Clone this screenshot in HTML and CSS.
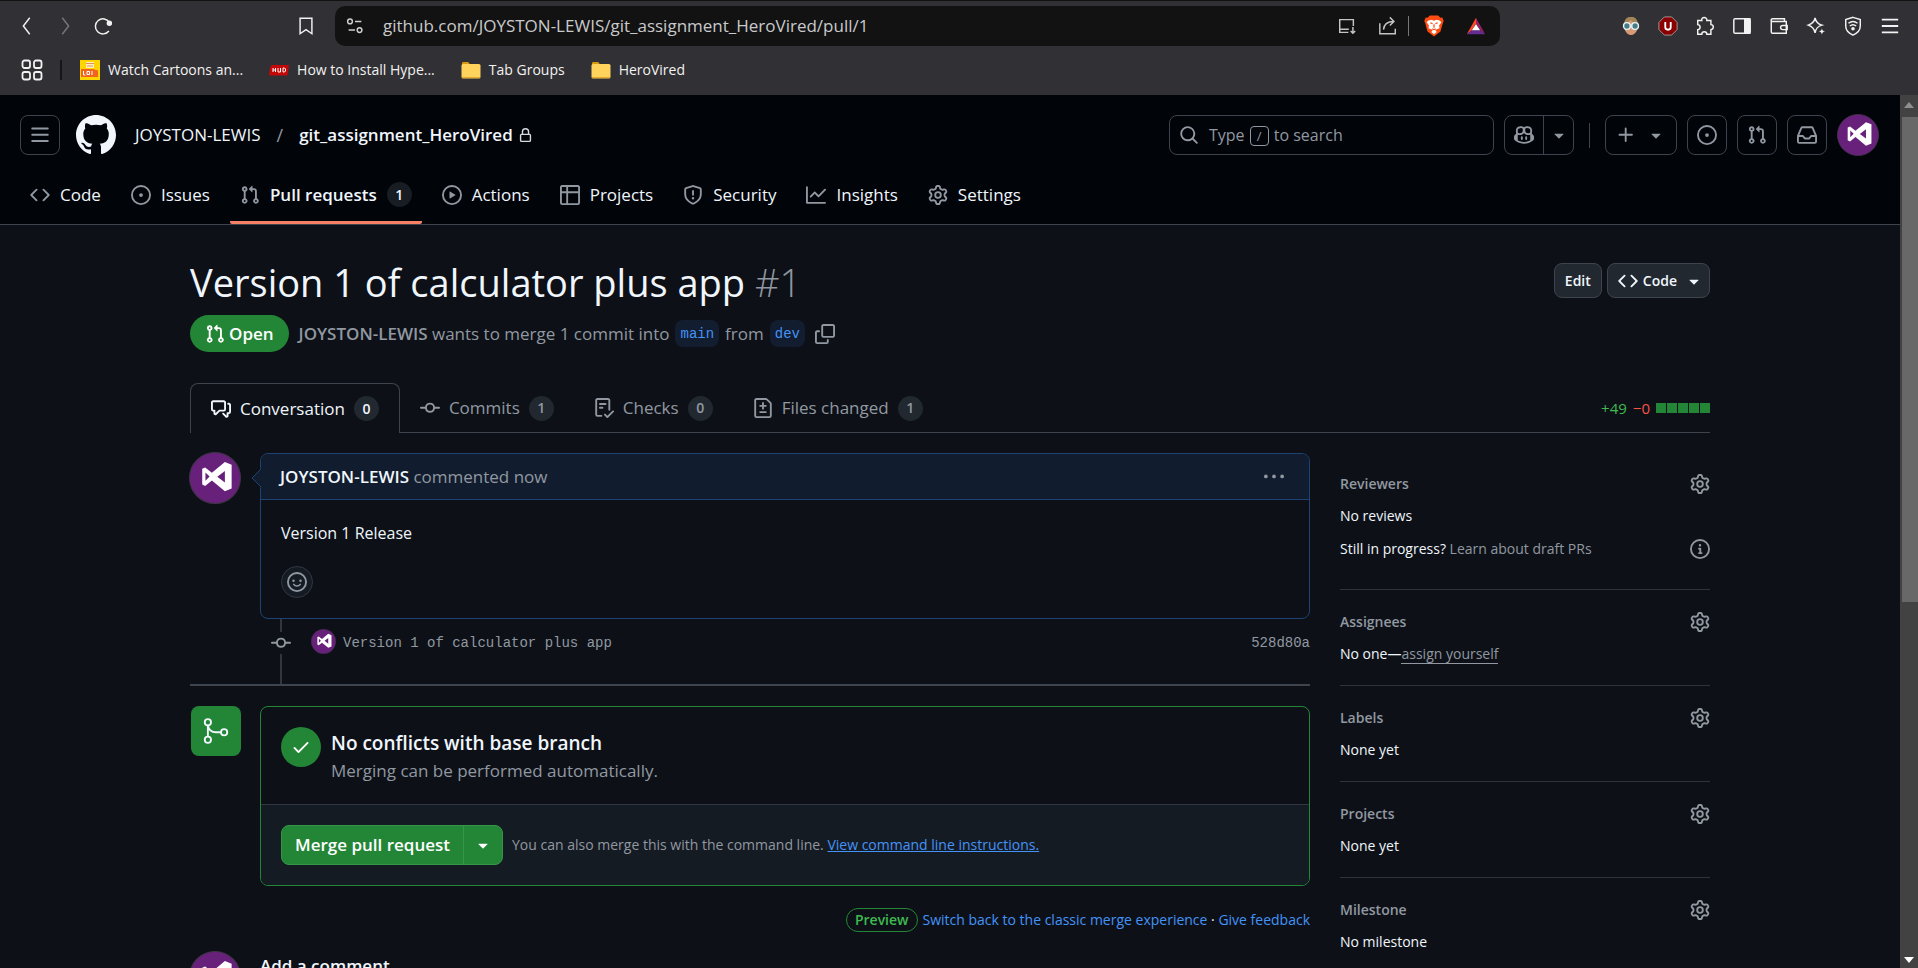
FILE: index.html
```html
<!DOCTYPE html>
<html lang="en">
<head>
<meta charset="utf-8">
<title>Version 1 of calculator plus app by JOYSTON-LEWIS · Pull Request #1</title>
<link rel="stylesheet" href="styles.css">
</head>
<body>
<svg class="sprite" aria-hidden="true">
  <symbol id="i-code" viewBox="0 0 16 16"><path d="m11.28 3.22 4.25 4.25a.75.75 0 0 1 0 1.06l-4.25 4.25a.749.749 0 0 1-1.275-.326.749.749 0 0 1 .215-.734L13.94 8l-3.72-3.72a.749.749 0 0 1 .326-1.275.749.749 0 0 1 .734.215Zm-6.56 0a.751.751 0 0 1 1.042.018.751.751 0 0 1 .018 1.042L2.06 8l3.72 3.72a.749.749 0 0 1-.326 1.275.749.749 0 0 1-.734-.215L.47 8.53a.75.75 0 0 1 0-1.06Z"/></symbol>
  <symbol id="i-issue" viewBox="0 0 16 16"><path d="M8 9.5a1.5 1.5 0 1 0 0-3 1.5 1.5 0 0 0 0 3Z"/><path d="M8 0a8 8 0 1 1 0 16A8 8 0 0 1 8 0ZM1.5 8a6.5 6.5 0 1 0 13 0 6.5 6.5 0 0 0-13 0Z"/></symbol>
  <symbol id="i-pr" viewBox="0 0 16 16"><path d="M1.5 3.25a2.25 2.25 0 1 1 3 2.122v5.256a2.251 2.251 0 1 1-1.5 0V5.372A2.25 2.25 0 0 1 1.5 3.25Zm5.677-.177L9.573.677A.25.25 0 0 1 10 .854V2.5h1A2.5 2.5 0 0 1 13.5 5v5.628a2.251 2.251 0 1 1-1.5 0V5a1 1 0 0 0-1-1h-1v1.646a.25.25 0 0 1-.427.177L7.177 3.427a.25.25 0 0 1 0-.354ZM3.75 2.5a.75.75 0 1 0 0 1.5.75.75 0 0 0 0-1.5Zm0 9.5a.75.75 0 1 0 0 1.5.75.75 0 0 0 0-1.5Zm8.25.75a.75.75 0 1 0 1.5 0 .75.75 0 0 0-1.5 0Z"/></symbol>
  <symbol id="i-play" viewBox="0 0 16 16"><path d="M8 0a8 8 0 1 1 0 16A8 8 0 0 1 8 0ZM1.5 8a6.5 6.5 0 1 0 13 0 6.5 6.5 0 0 0-13 0Zm4.879-2.773 4.264 2.559a.25.25 0 0 1 0 .428l-4.264 2.559A.25.25 0 0 1 6 10.559V5.442a.25.25 0 0 1 .379-.215Z"/></symbol>
  <symbol id="i-table" viewBox="0 0 16 16"><path d="M0 1.75C0 .784.784 0 1.75 0h12.5C15.216 0 16 .784 16 1.75v12.5A1.75 1.75 0 0 1 14.25 16H1.75A1.75 1.75 0 0 1 0 14.25ZM6.5 6.5v8h7.75a.25.25 0 0 0 .25-.25V6.5Zm8-1.5V1.75a.25.25 0 0 0-.25-.25H6.5V5Zm-13 1.5v7.75c0 .138.112.25.25.25H5v-8ZM5 5V1.5H1.75a.25.25 0 0 0-.25.25V5Z"/></symbol>
  <symbol id="i-shield" viewBox="0 0 16 16"><path d="M7.467.133a1.748 1.748 0 0 1 1.066 0l5.25 1.68A1.75 1.75 0 0 1 15 3.48V7c0 1.566-.32 3.182-1.303 4.682-.983 1.498-2.585 2.813-5.032 3.855a1.697 1.697 0 0 1-1.33 0c-2.447-1.042-4.049-2.357-5.032-3.855C1.32 10.182 1 8.566 1 7V3.48a1.75 1.75 0 0 1 1.217-1.667Zm.61 1.429a.25.25 0 0 0-.153 0l-5.25 1.68a.25.25 0 0 0-.174.238V7c0 1.358.275 2.666 1.057 3.86.784 1.194 2.121 2.34 4.366 3.297a.196.196 0 0 0 .154 0c2.245-.956 3.582-2.104 4.366-3.298C13.225 9.666 13.5 8.36 13.5 7V3.48a.251.251 0 0 0-.174-.237l-5.25-1.68ZM8.75 4.75v3a.75.75 0 0 1-1.5 0v-3a.75.75 0 0 1 1.5 0ZM9 10.5a1 1 0 1 1-2 0 1 1 0 0 1 2 0Z"/></symbol>
  <symbol id="i-graph" viewBox="0 0 16 16"><path d="M1.5 1.75V13.5h13.75a.75.75 0 0 1 0 1.5H.75a.75.75 0 0 1-.75-.75V1.75a.75.75 0 0 1 1.5 0Zm14.28 2.53-5.25 5.25a.75.75 0 0 1-1.06 0L7 7.06 4.28 9.78a.751.751 0 0 1-1.042-.018.751.751 0 0 1-.018-1.042l3.25-3.25a.75.75 0 0 1 1.06 0L10 7.94l4.72-4.72a.751.751 0 0 1 1.042.018.751.751 0 0 1 .018 1.042Z"/></symbol>
  <symbol id="i-gear" viewBox="0 0 16 16"><path d="M8 0a8.2 8.2 0 0 1 .701.031C9.444.095 9.99.645 10.16 1.29l.288 1.107c.018.066.079.158.212.224.231.114.454.243.668.386.123.082.233.09.299.071l1.103-.303c.644-.176 1.392.021 1.82.63.27.385.506.792.704 1.218.315.675.111 1.422-.364 1.891l-.814.806c-.049.048-.098.147-.088.294.016.257.016.515 0 .772-.01.147.038.246.088.294l.814.806c.475.469.679 1.216.364 1.891a7.977 7.977 0 0 1-.704 1.217c-.428.61-1.176.807-1.82.63l-1.102-.302c-.067-.019-.177-.011-.3.071a5.909 5.909 0 0 1-.668.386c-.133.066-.194.158-.211.224l-.29 1.106c-.168.646-.715 1.196-1.458 1.26a8.006 8.006 0 0 1-1.402 0c-.743-.064-1.289-.614-1.458-1.26l-.289-1.106c-.018-.066-.079-.158-.212-.224a5.738 5.738 0 0 1-.668-.386c-.123-.082-.233-.09-.299-.071l-1.103.303c-.644.176-1.392-.021-1.82-.63a8.12 8.12 0 0 1-.704-1.218c-.315-.675-.111-1.422.363-1.891l.815-.806c.05-.048.098-.147.088-.294a6.214 6.214 0 0 1 0-.772c.01-.147-.038-.246-.088-.294l-.815-.806C.635 6.045.431 5.298.746 4.623a7.92 7.92 0 0 1 .704-1.217c.428-.61 1.176-.807 1.82-.63l1.102.302c.067.019.177.011.3-.071.214-.143.437-.272.668-.386.133-.066.194-.158.211-.224l.29-1.106C6.009.645 6.556.095 7.299.03 7.53.01 7.764 0 8 0Zm-.571 1.525c-.036.003-.108.036-.137.146l-.289 1.105c-.147.561-.549.967-.998 1.189-.173.086-.34.183-.5.29-.417.278-.97.423-1.529.27l-1.103-.303c-.109-.03-.175.016-.195.045-.22.312-.412.644-.573.99-.014.031-.021.11.059.19l.815.806c.411.406.562.957.53 1.456a4.709 4.709 0 0 0 0 .582c.032.499-.119 1.05-.53 1.456l-.815.806c-.081.08-.073.159-.059.19.162.346.353.677.573.989.02.03.085.076.195.046l1.102-.303c.56-.153 1.113-.008 1.53.27.161.107.328.204.501.29.447.222.85.629.997 1.189l.289 1.105c.029.109.101.143.137.146a6.6 6.6 0 0 0 1.142 0c.036-.003.108-.036.137-.146l.289-1.105c.147-.561.549-.967.998-1.189.173-.086.34-.183.5-.29.417-.278.97-.423 1.529-.27l1.103.303c.109.029.175-.016.195-.045.22-.313.411-.644.573-.99.014-.031.021-.11-.059-.19l-.815-.806c-.411-.406-.562-.957-.53-1.456a4.709 4.709 0 0 0 0-.582c-.032-.499.119-1.05.53-1.456l.815-.806c.081-.08.073-.159.059-.19a6.464 6.464 0 0 0-.573-.989c-.02-.03-.085-.076-.195-.046l-1.102.303c-.56.153-1.113.008-1.53-.27a4.44 4.44 0 0 0-.501-.29c-.447-.222-.85-.629-.997-1.189l-.289-1.105c-.029-.11-.101-.143-.137-.146a6.6 6.6 0 0 0-1.142 0ZM11 8a3 3 0 1 1-6 0 3 3 0 0 1 6 0ZM9.5 8a1.5 1.5 0 1 0-3.001.001A1.5 1.5 0 0 0 9.5 8Z"/></symbol>
  <symbol id="i-lock" viewBox="0 0 16 16"><path d="M4 4a4 4 0 0 1 8 0v2h.25c.966 0 1.75.784 1.75 1.75v5.5A1.75 1.75 0 0 1 12.25 15h-8.5A1.75 1.75 0 0 1 2 13.25v-5.5C2 6.784 2.784 6 3.75 6H4Zm8.25 3.5h-8.5a.25.25 0 0 0-.25.25v5.5c0 .138.112.25.25.25h8.5a.25.25 0 0 0 .25-.25v-5.5a.25.25 0 0 0-.25-.25ZM10.5 6V4a2.5 2.5 0 1 0-5 0v2Z"/></symbol>
  <symbol id="i-search" viewBox="0 0 16 16"><path d="M10.68 11.74a6 6 0 0 1-7.922-8.982 6 6 0 0 1 8.982 7.922l3.04 3.04a.749.749 0 0 1-.326 1.275.749.749 0 0 1-.734-.215ZM11.5 7a4.499 4.499 0 1 0-8.997 0A4.499 4.499 0 0 0 11.5 7Z"/></symbol>
  <symbol id="i-caret" viewBox="0 0 16 16"><path d="m4.427 7.427 3.396 3.396a.25.25 0 0 0 .354 0l3.396-3.396A.25.25 0 0 0 11.396 7H4.604a.25.25 0 0 0-.177.427Z"/></symbol>
  <symbol id="i-plus" viewBox="0 0 16 16"><path d="M7.75 2a.75.75 0 0 1 .75.75V7h4.25a.75.75 0 0 1 0 1.5H8.5v4.25a.75.75 0 0 1-1.5 0V8.5H2.75a.75.75 0 0 1 0-1.5H7V2.75A.75.75 0 0 1 7.75 2Z"/></symbol>
  <symbol id="i-bars" viewBox="0 0 16 16"><path d="M1 2.75A.75.75 0 0 1 1.75 2h12.5a.75.75 0 0 1 0 1.5H1.75A.75.75 0 0 1 1 2.75Zm0 5A.75.75 0 0 1 1.75 7h12.5a.75.75 0 0 1 0 1.5H1.75A.75.75 0 0 1 1 7.75ZM1.75 12h12.5a.75.75 0 0 1 0 1.5H1.75a.75.75 0 0 1 0-1.5Z"/></symbol>
  <symbol id="i-inbox" viewBox="0 0 16 16"><path d="M2.8 2.06A1.75 1.75 0 0 1 4.41 1h7.18c.7 0 1.333.417 1.61 1.06l2.74 6.395c.04.093.06.194.06.295v4.5A1.75 1.75 0 0 1 14.25 15H1.75A1.75 1.75 0 0 1 0 13.25v-4.5c0-.101.02-.202.06-.295Zm1.61.44a.25.25 0 0 0-.23.152L1.887 8H4.75a.75.75 0 0 1 .6.3L6.625 10h2.75l1.275-1.7a.75.75 0 0 1 .6-.3h2.863L11.82 2.652a.25.25 0 0 0-.23-.152Zm10.09 7h-2.875l-1.275 1.7a.75.75 0 0 1-.6.3h-3.5a.75.75 0 0 1-.6-.3L4.375 9.5H1.5v3.75c0 .138.112.25.25.25h12.5a.25.25 0 0 0 .25-.25Z"/></symbol>
  <symbol id="i-copilot" viewBox="0 0 16 16"><path d="M7.998 15.035c-4.562 0-7.873-2.914-7.998-3.749V9.338c.085-.628.677-1.686 1.588-2.065.013-.07.024-.143.036-.218.029-.183.06-.384.126-.612-.201-.508-.254-1.084-.254-1.656 0-.87.128-1.769.693-2.484.579-.733 1.494-1.124 2.724-1.261 1.206-.134 2.262.034 2.944.765.05.053.096.108.139.165.044-.057.094-.112.143-.165.682-.731 1.738-.899 2.944-.765 1.23.137 2.145.528 2.724 1.261.566.715.693 1.614.693 2.484 0 .572-.053 1.148-.254 1.656.066.228.098.429.126.612.012.076.024.148.037.218.924.385 1.522 1.471 1.591 2.095v1.872c0 .766-3.351 3.795-8.002 3.795Zm0-1.485c2.28 0 4.584-1.11 5.002-1.433V7.862l-.023-.116c-.49.21-1.075.291-1.727.291-1.146 0-2.059-.327-2.71-.991A3.222 3.222 0 0 1 8 6.303a3.24 3.24 0 0 1-.544.743c-.65.664-1.563.991-2.71.991-.652 0-1.236-.081-1.727-.291l-.023.116v4.255c.419.323 2.722 1.433 5.002 1.433ZM6.762 2.83c-.193-.206-.637-.413-1.682-.297-1.019.113-1.479.404-1.713.7-.247.312-.369.789-.369 1.554 0 .793.129 1.171.308 1.371.162.181.519.379 1.442.379.853 0 1.339-.235 1.638-.54.315-.322.527-.827.617-1.553.117-.935-.037-1.395-.241-1.614Zm4.155-.297c-1.044-.116-1.488.091-1.681.297-.204.219-.359.679-.242 1.614.091.726.303 1.231.618 1.553.299.305.784.54 1.638.54.922 0 1.28-.198 1.442-.379.179-.2.308-.578.308-1.371 0-.765-.123-1.242-.37-1.554-.233-.296-.693-.587-1.713-.7Z"/><path d="M6.25 9.037a.75.75 0 0 1 .75.75v1.501a.75.75 0 0 1-1.5 0V9.787a.75.75 0 0 1 .75-.75Zm4.25.75v1.501a.75.75 0 0 1-1.5 0V9.787a.75.75 0 0 1 1.5 0Z"/></symbol>
  <symbol id="i-copy" viewBox="0 0 16 16"><path d="M0 6.75C0 5.784.784 5 1.75 5h1.5a.75.75 0 0 1 0 1.5h-1.5a.25.25 0 0 0-.25.25v7.5c0 .138.112.25.25.25h7.5a.25.25 0 0 0 .25-.25v-1.5a.75.75 0 0 1 1.5 0v1.5A1.75 1.75 0 0 1 9.25 16h-7.5A1.75 1.75 0 0 1 0 14.25Z"/><path d="M5 1.75C5 .784 5.784 0 6.75 0h7.5C15.216 0 16 .784 16 1.75v7.5A1.75 1.75 0 0 1 14.25 11h-7.5A1.75 1.75 0 0 1 5 9.25Zm1.75-.25a.25.25 0 0 0-.25.25v7.5c0 .138.112.25.25.25h7.5a.25.25 0 0 0 .25-.25v-7.5a.25.25 0 0 0-.25-.25Z"/></symbol>
  <symbol id="i-discussion" viewBox="0 0 16 16"><path d="M1.75 1h8.5c.966 0 1.75.784 1.75 1.75v5.5A1.75 1.75 0 0 1 10.25 10H7.061l-2.574 2.573A1.458 1.458 0 0 1 2 11.543V10h-.25A1.75 1.75 0 0 1 0 8.25v-5.5C0 1.784.784 1 1.75 1ZM1.5 2.75v5.5c0 .138.112.25.25.25h1a.75.75 0 0 1 .75.75v2.19l2.72-2.72a.749.749 0 0 1 .53-.22h3.5a.25.25 0 0 0 .25-.25v-5.5a.25.25 0 0 0-.25-.25h-8.5a.25.25 0 0 0-.25.25Zm13 2a.25.25 0 0 0-.25-.25h-.5a.75.75 0 0 1 0-1.5h.5c.966 0 1.75.784 1.75 1.75v5.5A1.75 1.75 0 0 1 14.25 12H14v1.543a1.458 1.458 0 0 1-2.487 1.03L9.22 12.28a.749.749 0 0 1 .326-1.275.749.749 0 0 1 .734.215l2.22 2.22v-2.19a.75.75 0 0 1 .75-.75h1a.25.25 0 0 0 .25-.25Z"/></symbol>
  <symbol id="i-commit" viewBox="0 0 16 16"><path d="M11.93 8.5a4.002 4.002 0 0 1-7.86 0H.75a.75.75 0 0 1 0-1.5h3.32a4.002 4.002 0 0 1 7.86 0h3.32a.75.75 0 0 1 0 1.5Zm-1.43-.75a2.5 2.5 0 1 0-5 0 2.5 2.5 0 0 0 5 0Z"/></symbol>
  <symbol id="i-checklist" viewBox="0 0 16 16"><path d="M2.5 1.75v11.5c0 .138.112.25.25.25h3.17a.75.75 0 0 1 0 1.5H2.75A1.75 1.75 0 0 1 1 13.25V1.75C1 .784 1.784 0 2.75 0h8.5C12.216 0 13 .784 13 1.75v7.736a.75.75 0 0 1-1.5 0V1.75a.25.25 0 0 0-.25-.25h-8.5a.25.25 0 0 0-.25.25Zm13.274 9.537v-.001l-4.557 4.45a.75.75 0 0 1-1.055-.008l-1.943-1.95a.75.75 0 0 1 1.062-1.058l1.419 1.425 4.026-3.932a.75.75 0 1 1 1.048 1.074ZM4.75 4h4.5a.75.75 0 0 1 0 1.5h-4.5a.75.75 0 0 1 0-1.5ZM4 7.75A.75.75 0 0 1 4.75 7h2a.75.75 0 0 1 0 1.5h-2A.75.75 0 0 1 4 7.75Z"/></symbol>
  <symbol id="i-filediff" viewBox="0 0 16 16"><path d="M1 1.75C1 .784 1.784 0 2.75 0h7.586c.464 0 .909.184 1.237.513l2.914 2.914c.329.328.513.773.513 1.237v9.586A1.75 1.75 0 0 1 13.25 16H2.75A1.75 1.75 0 0 1 1 14.25Zm1.75-.25a.25.25 0 0 0-.25.25v12.5c0 .138.112.25.25.25h10.5a.25.25 0 0 0 .25-.25V4.664a.25.25 0 0 0-.073-.177l-2.914-2.914a.25.25 0 0 0-.177-.073ZM8 3.25a.75.75 0 0 1 .75.75v1.5h1.5a.75.75 0 0 1 0 1.5h-1.5v1.5a.75.75 0 0 1-1.5 0V7h-1.5a.75.75 0 0 1 0-1.5h1.5V4A.75.75 0 0 1 8 3.25Zm-3 8a.75.75 0 0 1 .75-.75h4.5a.75.75 0 0 1 0 1.5h-4.5a.75.75 0 0 1-.75-.75Z"/></symbol>
  <symbol id="i-kebab" viewBox="0 0 16 16"><path d="M8 9a1.5 1.5 0 1 0 0-3 1.5 1.5 0 0 0 0 3ZM1.5 9a1.5 1.5 0 1 0 0-3 1.5 1.5 0 0 0 0 3Zm13 0a1.5 1.5 0 1 0 0-3 1.5 1.5 0 0 0 0 3Z"/></symbol>
  <symbol id="i-smiley" viewBox="0 0 16 16"><circle cx="8" cy="8" r="7.25" fill="none" stroke="currentColor" stroke-width="1.5"/><circle cx="5.2" cy="7" r="1"/><circle cx="10.8" cy="7" r="1"/><path d="M5.4 9.9c1.2 1.7 4 1.7 5.2 0" fill="none" stroke="currentColor" stroke-width="1.3" stroke-linecap="round"/></symbol>
  <symbol id="i-info" viewBox="0 0 16 16"><path d="M0 8a8 8 0 1 1 16 0A8 8 0 0 1 0 8Zm8-6.5a6.5 6.5 0 1 0 0 13 6.5 6.5 0 0 0 0-13ZM6.5 7.75A.75.75 0 0 1 7.25 7h1a.75.75 0 0 1 .75.75v2.75h.25a.75.75 0 0 1 0 1.5h-2a.75.75 0 0 1 0-1.5h.25v-2h-.25a.75.75 0 0 1-.75-.75ZM8 6a1 1 0 1 1 0-2 1 1 0 0 1 0 2Z"/></symbol>
  <symbol id="i-check" viewBox="0 0 16 16"><path d="M13.78 4.22a.75.75 0 0 1 0 1.06l-7.25 7.25a.75.75 0 0 1-1.06 0L2.22 9.28a.751.751 0 0 1 .018-1.042.751.751 0 0 1 1.042-.018L6 10.94l6.72-6.72a.75.75 0 0 1 1.06 0Z"/></symbol>
  <symbol id="i-merge" viewBox="0 0 24 24"><g fill="none" stroke="currentColor" stroke-width="1.5"><circle cx="5.5" cy="5" r="2.5"/><circle cx="5.5" cy="19" r="2.5"/><circle cx="18.5" cy="13" r="2.5"/><path d="M5.5 7.5v9M5.5 7.5c.6 3.4 3 5.5 6.500 5.500h4"/></g></symbol>
  <symbol id="i-mark" viewBox="0 0 16 16"><path d="M8 0c4.42 0 8 3.58 8 8a8.013 8.013 0 0 1-5.45 7.59c-.4.08-.55-.17-.55-.38 0-.27.01-1.13.01-2.2 0-.75-.25-1.23-.54-1.48 1.78-.2 3.65-.88 3.65-3.95 0-.88-.31-1.59-.82-2.15.08-.2.36-1.02-.08-2.12 0 0-.67-.22-2.2.82-.64-.18-1.32-.27-2-.27-.68 0-1.36.09-2 .27-1.53-1.03-2.2-.82-2.2-.82-.44 1.1-.16 1.92-.08 2.12-.51.56-.82 1.28-.82 2.15 0 3.06 1.86 3.75 3.64 3.95-.23.2-.44.55-.51 1.07-.46.21-1.61.55-2.33-.66-.15-.24-.6-.83-1.23-.82-.67.01-.27.38.01.53.34.19.73.9.82 1.13.16.45.68 1.31 2.69.94 0 .67.01 1.3.01 1.49 0 .21-.15.45-.55.38A7.995 7.995 0 0 1 0 8c0-4.42 3.58-8 8-8Z"/></symbol>
  <symbol id="i-avatar" viewBox="0 0 50 50"><circle cx="25" cy="25" r="24.500" fill="#68217a" stroke="#3f3346"/><path fill="#fff" fill-rule="evenodd" d="M12.700 16 15.500 14.800 22 20 34.500 9.700 41 12.300V35l-6.500 2.700L22 27.400l-6.500 5.200-2.800-1.400ZM15.800 19.600v8l4-4ZM34.500 18.200 27.200 23.700l7.300 5.600Z"/></symbol>
  <symbol id="i-folder" viewBox="0 0 20 20"><path fill="#d9990f" d="M1 3.500C1 2.700 1.600 2 2.400 2h4.800L9.500 5H19v6H1Z"/><rect x="0.500" y="4" width="19" height="14.500" rx="1.600" fill="#ffd35c"/><path d="M1 17.500h18" stroke="#e5a72b"/></symbol>
</svg>

<div class="browser">
  <div class="toolbar">
    <div class="nav-buttons">
      <button class="tool" aria-label="Back"><svg viewBox="0 0 22 22"><path d="M14 2 7 11l7 9"/></svg></button>
      <button class="tool dim" aria-label="Forward"><svg viewBox="0 0 22 22"><path d="m8 2 7 9-7 9"/></svg></button>
      <button class="tool" aria-label="Reload"><svg viewBox="0 0 22 22"><path d="M17.500 16.500A8.300 8.300 0 1 1 18 7"/><circle cx="18" cy="8" r="2.200" fill="currentColor"/></svg></button>
    </div>
    <button class="tool" aria-label="Bookmark this page"><svg viewBox="0 0 22 22"><path d="M4.500 2.500h13v17L11 15l-6.500 4.500Z"/></svg></button>
    <div class="address">
      <svg class="tune" viewBox="0 0 22 22"><circle cx="5.500" cy="6" r="2.600"/><path d="M11 6h7M4 15.500h7"/><circle cx="16" cy="15.500" r="2.600"/></svg>
      <input class="url" type="text" aria-label="Address" value="github.com/JOYSTON-LEWIS/git_assignment_HeroVired/pull/1">
      <button class="tool soft" aria-label="Install app"><svg viewBox="0 0 22 22"><path d="M12.500 18H3V4h15v7M3 14.500h10M17.500 12v7M15 16.500l2.500 2.500 2.500-2.500"/></svg></button>
      <button class="tool soft" aria-label="Share"><svg viewBox="0 0 22 22"><path d="M2 8v11.500h17V14M6 15c.5-6 4-9 11-9M13 1.500 17.500 6 13 10.500"/></svg></button>
      <span class="bar"></span>
      <button class="tool shieldbtn" aria-label="Brave Shields"><svg viewBox="0 0 24 26"><path d="M7.500 1.500h9L19 4l2-.3 1.500 4-1 2.300-2.500 9-7 5.500L5 19 2.500 10l-1-2.300 1.500-4L5 4Z" fill="#ff4b0f" stroke="none"/><path d="m6 7 3.500-.8 2.500 1 2.500-1L18 7l2 2-2.500 3.500.5 3-3 1-1.500 1.500L15 19.500l-3 2.500-3-2.500L10.500 18 9 16.500l-3-1 .5-3L4 9Z" fill="#fff" stroke="none"/><path d="m8 9.500 2.500 1M16 9.500l-2.500 1M12 11v4M10 16l2 1 2-1" stroke="#ff4b0f" stroke-width="1.300"/></svg></button>
      <button class="tool" aria-label="Rewards"><svg viewBox="0 0 24 22"><path fill="#ff4724" stroke="none" d="M12 1v7l-5 8L1 21Z"/><path fill="#9e1f63" stroke="none" d="M12 1v7l5.500 8L23 21Z"/><path fill="#662d91" stroke="none" d="m1 21 6-5h10.500l5.500 5Z"/><path fill="#fff" stroke="none" d="m12 8.500-5 7.500h10Z"/></svg></button>
    </div>
    <div class="extensions">
      <button class="tool" aria-label="Profile extension"><svg viewBox="0 0 22 22"><path d="M4 9c0-5 3-8 7-8s7 3 7 8v4c0 5-4 8-7 8s-7-3-7-8Z" fill="#d79a76" stroke="none"/><path d="M3.500 9C3.500 4 6 1 11 1s7.500 3 7.500 8c-4-1-6-2.500-8-4.500C9.500 6.500 6.500 8.500 3.500 9Z" fill="#a28557" stroke="none"/><circle cx="6.500" cy="11" r="3.700" fill="#467b87" stroke="#e9f3f4"/><circle cx="15.500" cy="11" r="3.700" fill="#467b87" stroke="#e9f3f4"/></svg></button>
      <button class="tool" aria-label="uBlock"><svg viewBox="0 0 22 22"><path d="M7 1h8l6 6v8l-6 6H7l-6-6V7Z" fill="#8a0000" stroke="#a9a0a0" stroke-width="1"/><path d="M8 6.500v6c0 3.500 6 3.500 6 0v-6" stroke="#fff" stroke-width="2"/></svg></button>
      <button class="tool" aria-label="Extensions"><svg viewBox="0 0 22 22"><path d="M3 5h4.500c-1-4.500 6-4.500 5.500 0h4.500v4.500c3.500 0 3.500 5 0 5.500v5H13c0-3.500-5.500-3.500-5.500 0H3v-5c3.500-.5 3.500-5 0-5.500Z"/></svg></button>
      <button class="tool" aria-label="Sidebar"><svg viewBox="0 0 22 22"><rect x="2" y="3" width="18" height="16" rx="1.500"/><path d="M14 3h5.500v16H14Z" fill="currentColor"/></svg></button>
      <button class="tool" aria-label="Wallet"><svg viewBox="0 0 22 22"><path d="M2.500 5.500v12c0 1 .7 1.500 1.500 1.500h15V6H4C1.500 6 2 3 4 3h13v3M20 10.500h-5c-3 0-3 4.500 0 4.500h5Z"/></svg></button>
      <button class="tool" aria-label="Leo AI"><svg viewBox="0 0 22 22"><path d="M10 2c.8 4.500 2.500 6.500 7.500 8-5 1.500-6.700 3.500-7.500 8.500-.8-5-3-7-7.500-8.500C7 8.500 9.200 6.500 10 2Z"/><path d="M17.500 13.500c.4 2.500 1 3 3.500 3.500-2.500.5-3 1-3.500 3.500-.4-2.500-1-3-3.500-3.500 2.500-.5 3-1 3.500-3.500Z" fill="currentColor" stroke="none"/></svg></button>
      <button class="tool" aria-label="VPN"><svg viewBox="0 0 22 22"><path d="M11 1.500 19 4v7c0 4.500-3.500 8-8 10-4.500-2-8-5.500-8-10V4Z"/><path d="M6 8c3-2.500 7-2.500 10 0M7.500 11c2-1.700 5-1.700 7 0"/><circle cx="11" cy="14" r="1.200" fill="currentColor"/></svg></button>
      <button class="tool" aria-label="Menu"><svg viewBox="0 0 22 22"><path d="M2 4h18M2 11h18M2 18h18" stroke-width="2"/></svg></button>
    </div>
  </div>
  <div class="bookmarks">
    <button class="tool" aria-label="All bookmarks"><svg viewBox="0 0 22 22" class="apps"><rect x="1.500" y="1.500" width="7.500" height="7.500" rx="2"/><rect x="13" y="1.500" width="7.500" height="7.500" rx="2"/><rect x="1.500" y="13" width="7.500" height="7.500" rx="2"/><rect x="13" y="13" width="7.500" height="7.500" rx="2"/></svg></button>
    <span class="mark-bar"></span>
    <a class="mark" href="#"><svg viewBox="0 0 20 20"><path fill="#ffd500" d="M0 0h20v20H0Z"/><path fill="#fff0c0" d="M6 2h8v6H6Z"/><path fill="#f0641e" d="M1 9h12l5 1.500V17H1Z"/><path d="M6 3.500h8M7 6h6" stroke="#e98a5a"/><path d="M3.500 11v4M3.500 15h2M7 11.500v3h2.500v-3ZM12 11v4" stroke="#fff" fill="none"/></svg>Watch Cartoons an...</a>
    <a class="mark" href="#"><svg viewBox="0 0 20 20"><path fill="#c40808" d="M2.500 5H20l-1.500 10.500H0L1 8Z"/><path d="M4 8v4M4 10h2.500M6.500 8v4M9 8v4h2.500V8M14 8v4h1.500l1-1V9l-1-1Z" stroke="#fff" fill="none"/></svg>How to Install Hype...</a>
    <a class="mark" href="#"><svg><use href="#i-folder"/></svg>Tab Groups</a>
    <a class="mark" href="#"><svg><use href="#i-folder"/></svg>HeroVired</a>
  </div>
</div>

<div class="viewport">
<div class="page">
  <header class="gh-header">
    <div class="top">
      <button class="sq" aria-label="Open menu"><svg class="ic"><use href="#i-bars"/></svg></button>
      <a class="logo" href="#" aria-label="Homepage"><svg><use href="#i-mark"/></svg></a>
      <nav class="crumbs" aria-label="Breadcrumb"><a href="#">JOYSTON-LEWIS</a><span class="slash">/</span><a class="repo" href="#">git_assignment_HeroVired</a><svg class="lock"><use href="#i-lock"/></svg></nav>
      <div class="actions">
        <button class="search"><svg class="ic"><use href="#i-search"/></svg><span>Type <kbd>/</kbd> to search</span></button>
        <div class="split"><button aria-label="Copilot"><svg class="ic"><use href="#i-copilot"/></svg></button><button class="narrow" aria-label="Copilot menu"><svg class="ic"><use href="#i-caret"/></svg></button></div>
        <span class="vbar"></span>
        <button class="sq create" aria-label="Create new"><svg class="ic"><use href="#i-plus"/></svg><svg class="ic"><use href="#i-caret"/></svg></button>
        <button class="sq" aria-label="Issues"><svg class="ic"><use href="#i-issue"/></svg></button>
        <button class="sq" aria-label="Pull requests"><svg class="ic"><use href="#i-pr"/></svg></button>
        <button class="sq" aria-label="Notifications"><svg class="ic"><use href="#i-inbox"/></svg></button>
        <button class="me" aria-label="Account"><svg><use href="#i-avatar"/></svg></button>
      </div>
    </div>
    <nav class="repo-nav" aria-label="Repository">
      <a href="#"><svg class="ic"><use href="#i-code"/></svg>Code</a>
      <a href="#"><svg class="ic"><use href="#i-issue"/></svg>Issues</a>
      <a href="#" class="current"><svg class="ic"><use href="#i-pr"/></svg>Pull requests<span class="count">1</span></a>
      <a href="#"><svg class="ic"><use href="#i-play"/></svg>Actions</a>
      <a href="#"><svg class="ic"><use href="#i-table"/></svg>Projects</a>
      <a href="#"><svg class="ic"><use href="#i-shield"/></svg>Security</a>
      <a href="#"><svg class="ic"><use href="#i-graph"/></svg>Insights</a>
      <a href="#"><svg class="ic"><use href="#i-gear"/></svg>Settings</a>
    </nav>
  </header>

  <main class="content">
    <div class="title-row">
      <h1>Version 1 of calculator plus app <span>#1</span></h1>
      <div class="title-actions">
        <button class="btn">Edit</button>
        <button class="btn code-btn"><svg class="ic"><use href="#i-code"/></svg>Code<svg class="ic"><use href="#i-caret"/></svg></button>
      </div>
    </div>
    <div class="meta">
      <span class="state"><svg class="ic"><use href="#i-pr"/></svg>Open</span>
      <span><a class="author" href="#">JOYSTON-LEWIS</a> wants to merge 1 commit into</span>
      <a class="branch" href="#">main</a>
      <span>from</span>
      <a class="branch" href="#">dev</a>
      <button class="plain copy" aria-label="Copy branch name"><svg class="ic"><use href="#i-copy"/></svg></button>
    </div>
    <div class="tabs">
      <a href="#" class="tab on"><svg class="ic"><use href="#i-discussion"/></svg>Conversation<span class="count">0</span></a>
      <a href="#" class="tab"><svg class="ic"><use href="#i-commit"/></svg>Commits<span class="count">1</span></a>
      <a href="#" class="tab"><svg class="ic"><use href="#i-checklist"/></svg>Checks<span class="count">0</span></a>
      <a href="#" class="tab"><svg class="ic"><use href="#i-filediff"/></svg>Files changed<span class="count">1</span></a>
      <div class="diffstat"><span class="add">+49</span><span class="del">−0</span><span class="blocks"><i></i><i></i><i></i><i></i><i></i></span></div>
    </div>

    <div class="columns">
      <div class="thread">
        <div class="row">
          <svg class="avatar"><use href="#i-avatar"/></svg>
          <article class="comment">
            <svg class="pointer" viewBox="0 0 10 20"><path d="M10 0 1 10l9 10Z" fill="#111d2e"/><path d="M10 1 1 10l9 9" fill="none" stroke="#1e4273"/></svg>
            <header><span><a href="#">JOYSTON-LEWIS</a> commented now</span><button class="plain" aria-label="Show options"><svg class="ic"><use href="#i-kebab"/></svg></button></header>
            <div class="comment-body"><p>Version 1 Release</p><button class="react" aria-label="Add reaction"><svg class="ic"><use href="#i-smiley"/></svg></button></div>
          </article>
        </div>
        <div class="commit-row">
          <span class="badge"><svg class="ic"><use href="#i-commit"/></svg></span>
          <svg class="mini"><use href="#i-avatar"/></svg>
          <a href="#" class="msg">Version 1 of calculator plus app</a>
          <a href="#" class="sha">528d80a</a>
        </div>
        <div class="row merge-row">
          <span class="merge-icon"><svg><use href="#i-merge"/></svg></span>
          <section class="merge-box">
            <div class="merge-status">
              <span class="ok"><svg class="ic"><use href="#i-check"/></svg></span>
              <div><h2>No conflicts with base branch</h2><p>Merging can be performed automatically.</p></div>
            </div>
            <div class="merge-foot">
              <div class="merge-btn"><button>Merge pull request</button><button class="more" aria-label="Select merge method"><svg class="ic"><use href="#i-caret"/></svg></button></div>
              <p>You can also merge this with the command line. <a href="#">View command line instructions.</a></p>
            </div>
          </section>
        </div>
        <div class="preview"><span class="pill">Preview</span><span><a href="#">Switch back to the classic merge experience</a> · <a href="#">Give feedback</a></span></div>
        <div class="row add-row">
          <svg class="avatar"><use href="#i-avatar"/></svg>
          <h2>Add a comment</h2>
        </div>
      </div>

      <aside class="side">
        <section><header><h3>Reviewers</h3><button class="plain" aria-label="Select reviewers"><svg class="ic"><use href="#i-gear"/></svg></button></header>
          <p>No reviews</p>
          <div class="draft"><p>Still in progress? <a href="#">Learn about draft PRs</a></p><svg class="ic"><use href="#i-info"/></svg></div></section>
        <section><header><h3>Assignees</h3><button class="plain" aria-label="Select assignees"><svg class="ic"><use href="#i-gear"/></svg></button></header>
          <p>No one—<button class="assign">assign yourself</button></p></section>
        <section><header><h3>Labels</h3><button class="plain" aria-label="Select labels"><svg class="ic"><use href="#i-gear"/></svg></button></header>
          <p>None yet</p></section>
        <section><header><h3>Projects</h3><button class="plain" aria-label="Select projects"><svg class="ic"><use href="#i-gear"/></svg></button></header>
          <p>None yet</p></section>
        <section><header><h3>Milestone</h3><button class="plain" aria-label="Select milestone"><svg class="ic"><use href="#i-gear"/></svg></button></header>
          <p>No milestone</p></section>
      </aside>
    </div>
  </main>
</div>
<div class="scrollbar" aria-hidden="true"><span class="arrow up"></span><span class="thumb"></span><span class="track"></span><span class="arrow down"></span></div>
</div>
</body>
</html>
```
FILE: styles.css
```css
* { box-sizing: border-box; margin: 0; padding: 0; }
html, body { height: 100%; }
body {
  display: flex; flex-direction: column; overflow: hidden;
  background: #0d1117; color: #f0f6fc;
  font-family: "Open Sans", "Noto Sans", sans-serif; font-size: 17px; line-height: 24px;
}
a { color: inherit; text-decoration: none; }
button { font: inherit; color: inherit; background: none; border: 0; }
.sprite { position: absolute; width: 0; height: 0; }
.ic { width: 20px; height: 20px; fill: currentColor; flex: none; }
.plain { display: flex; color: #9198a1; }

/* Browser chrome */
.browser { background: #313034; border-top: 1px solid #111; height: 95px; flex: none; color: #f2f2f2; }
.toolbar { display: flex; align-items: center; height: 50px; padding: 0 16px 0 15px; }
.tool { display: flex; width: 24px; height: 24px; align-items: center; justify-content: center; }
.tool svg, .tune { width: 20px; height: 20px; fill: none; stroke: currentColor; stroke-width: 1.6; }
.dim { color: #77767a; }
.soft { color: #c4c4c6; }
.nav-buttons { display: flex; gap: 14px; width: 279px; }
.address { display: flex; align-items: center; flex: 1; height: 40px; margin-left: 17px; padding: 0 12px 0 10px; background: #121213; border-radius: 10px; }
.tune { color: #d0d0d0; margin-right: 18px; flex: none; }
.url { flex: 1; min-width: 0; background: none; border: 0; outline: 0; color: #c9c9cb; font: inherit; }
.soft + .soft { margin-left: 17px; }
.bar { width: 1px; height: 20px; margin: 0 13px 0 8px; background: #77777a; }
.shieldbtn { margin-right: 18px; }
.tool.shieldbtn svg { width: 24px; height: 24px; }
.extensions { display: flex; gap: 13px; margin-left: 119px; }
.bookmarks { display: flex; align-items: center; height: 38px; padding-left: 20px; font-size: 14px; }
.tool .apps { width: 22px; height: 22px; stroke-width: 1.8; }
.mark-bar { width: 2px; height: 20px; margin: 0 18px 0 16px; background: #161617; }
.mark { display: flex; align-items: center; gap: 8px; margin-right: 26px; }
.mark svg { width: 20px; height: 20px; }

.viewport { display: flex; flex: 1; min-height: 0; }
.page { flex: 1; min-width: 0; overflow: hidden; }

/* Site header */
.gh-header { background: #010409; border-bottom: 1px solid #3d444d; }
.top { display: flex; align-items: center; padding: 20px 21px 0 20px; height: 60px; }
.sq { display: flex; align-items: center; justify-content: center; width: 40px; height: 40px; border: 1px solid #3d444d; border-radius: 8px; color: #9198a1; }
.logo { margin-left: 16px; }
.logo svg { display: block; width: 40px; height: 40px; fill: #f0f6fc; }
.crumbs { display: flex; align-items: center; margin-left: 19px; }
.slash { color: #9198a1; margin: 0 16px; font-size: 18px; }
.repo { font-weight: 600; }
.lock { width: 15px; height: 15px; fill: #d5dbe1; margin-left: 5px; }
.actions { display: flex; align-items: center; gap: 10px; margin-left: auto; color: #9198a1; }
.search { display: flex; align-items: center; gap: 10px; width: 325px; height: 40px; padding: 0 9px; border: 1px solid #3d444d; border-radius: 8px; font-size: 16px; }
kbd { display: inline-block; font: inherit; font-size: 13px; line-height: 18px; padding: 0 6px; margin: 0 1px; border: 1px solid #9198a1; border-radius: 4px; }
.split { display: flex; height: 40px; border: 1px solid #3d444d; border-radius: 8px; }
.split button { display: flex; align-items: center; justify-content: center; width: 38px; }
.split .narrow { width: 30px; border-left: 1px solid #3d444d; }
.vbar { width: 1px; height: 25px; margin: 0 5px; background: #3d444d; }
.create { width: 72px; gap: 10px; }
.me svg { display: block; width: 42px; height: 42px; }
.repo-nav { display: flex; gap: 10px; padding: 0 20px; margin-top: 10px; }
.repo-nav a { display: flex; align-items: center; gap: 10px; height: 59px; padding: 3px 10px 0; border-bottom: 3px solid transparent; }
.repo-nav .ic { color: #9198a1; }
.repo-nav .current { font-weight: 600; border-bottom-color: #f78166; border-radius: 2px; }
.count { display: flex; align-items: center; justify-content: center; height: 25px; min-width: 25px; padding: 0 8px; border-radius: 13px; background: #212830; font-size: 14px; font-weight: 600; }
.repo-nav .count { background: #181d24; }

/* Pull request heading */
.content { max-width: 1600px; margin: 0 auto; padding: 30px 40px 0; }
.title-row { display: flex; justify-content: space-between; align-items: flex-start; }
h1 { font-size: 38px; line-height: 50px; font-weight: 400; padding: 2px 0; }
h1 span { color: #9198a1; font-weight: 300; }
.title-actions { display: flex; gap: 5px; padding-top: 8px; }
.btn { display: flex; align-items: center; gap: 5px; height: 35px; padding: 0 10px; border: 1px solid #3d444d; border-radius: 8px; background: #212830; font-size: 14px; font-weight: 600; }
.code-btn .ic:last-child { margin: 0 -5px 0 2px; }
.meta { display: flex; align-items: center; margin-top: 6px; color: #9198a1; gap: 6px; }
.state { display: flex; align-items: center; gap: 4px; height: 37px; padding: 0 15px; margin-right: 4px; border-radius: 19px; background: #238636; color: #fff; font-weight: 600; }
.author { font-weight: 600; }
.branch { padding: 0 5px; height: 27px; line-height: 28px; border-radius: 8px; background: #121d2f; color: #4493f8; font-family: "Liberation Mono", monospace; font-size: 14px; }
.copy { margin-left: 4px; }
.tabs { display: flex; margin-top: 31px; height: 50px; box-shadow: inset 0 -1px #3d444d; color: #9198a1; }
.tab { display: flex; align-items: center; gap: 9px; padding: 0 20px; }
.tab.on { color: #f0f6fc; border: 1px solid #3d444d; border-bottom: 0; border-radius: 8px 8px 0 0; background: #0d1117; }
.diffstat { display: flex; align-items: center; gap: 6px; margin-left: auto; font-size: 15px; }
.add { color: #3fb950; }
.del { color: #f85149; }
.blocks { display: flex; gap: 1px; }
.blocks i { width: 10px; height: 10px; background: #238636; }

/* Conversation */
.columns { display: grid; grid-template-columns: minmax(0, 1fr) 370px; gap: 30px; margin-top: 20px; }
.row { display: flex; align-items: flex-start; gap: 19px; }
.avatar { width: 52px; height: 52px; margin: -1px 0 0 -1px; flex: none; }
.comment { position: relative; flex: 1; border: 1px solid #1e4273; border-radius: 8px; }
.pointer { position: absolute; left: -10px; top: 14px; width: 10px; height: 20px; }
.comment header { display: flex; justify-content: space-between; align-items: center; height: 46px; padding: 0 25px 0 19px; color: #9198a1; background: #111d2e; border-bottom: 1px solid #1e4273; border-radius: 7px 7px 0 0; }
.comment header a { color: #f0f6fc; font-weight: 600; }
.comment-body { padding: 21px 20px 20px; font-size: 16px; }
.react { display: flex; align-items: center; justify-content: center; width: 32px; height: 32px; margin-top: 21px; border: 1px solid #2f3742; border-radius: 50%; background: #151b23; color: #9198a1; }
.commit-row { display: flex; align-items: center; height: 67px; padding: 0 0 17px 81px; border-bottom: 2px solid #3d444d; color: #9198a1; font-family: "Liberation Mono", monospace; font-size: 14px; background: linear-gradient(#2f3640, #2f3640) 90px 0 / 2px 100% no-repeat; }
.badge { display: flex; padding: 1px 0; background: #0d1117; }
.mini { width: 25px; height: 25px; margin: 0 7px 3px 20px; }
.sha { margin-left: auto; }
.merge-row { margin-top: 20px; }
.merge-icon { display: flex; align-items: center; justify-content: center; width: 50px; height: 50px; margin-left: 1px; border-radius: 8px; background: #238636; }
.merge-icon svg { width: 30px; height: 30px; }
.merge-box { flex: 1; border: 1px solid #238636; border-radius: 8px; overflow: hidden; }
.merge-status { display: flex; gap: 10px; height: 97px; padding: 20px; }
.merge-status h2 { margin-top: 2px; font-size: 19px; line-height: 28px; font-weight: 600; }
.merge-status p { color: #9198a1; line-height: 28px; }
.ok { display: flex; align-items: center; justify-content: center; width: 40px; height: 40px; border-radius: 50%; background: #238636; color: #fff; }
.merge-foot { display: flex; align-items: center; gap: 9px; height: 81px; padding: 0 20px; background: #151b23; border-top: 1px solid #2f3742; color: #9198a1; font-size: 14px; }
.merge-foot a { color: #4493f8; text-decoration: underline; }
.merge-btn { display: flex; height: 40px; border: 1px solid #369648; border-radius: 8px; background: #238636; color: #fff; font-size: 17px; font-weight: 600; }
.merge-btn button { padding: 0 13px; }
.merge-btn .more { display: flex; align-items: center; justify-content: center; width: 39px; padding: 0; border-left: 1px solid #369648; }
.preview { display: flex; justify-content: flex-end; align-items: center; gap: 5px; margin-top: 22px; font-size: 14px; }
.preview a { color: #4493f8; }
.pill { height: 24px; line-height: 22px; padding: 0 8px; border: 1px solid #238636; border-radius: 12px; color: #3fb950; font-weight: 600; }
.add-row { margin-top: 20px; }
.add-row h2 { font-size: 17px; line-height: 24px; font-weight: 600; padding-top: 2px; }

/* Sidebar */
.side { padding-top: 21px; font-size: 14px; line-height: 20px; }
.side section { border-bottom: 1px solid #2f353d; padding-bottom: 21px; margin-bottom: 22px; }
.side header { display: flex; justify-content: space-between; align-items: center; height: 20px; margin-bottom: 12px; }
.side h3 { font-size: 14px; font-weight: 600; color: #9198a1; }
.side section:first-child { padding-bottom: 30px; }
.draft { display: flex; justify-content: space-between; margin-top: 13px; color: #f0f6fc; }
.draft a { color: #9198a1; }
.draft .ic { color: #9198a1; }
.assign { color: #9198a1; border-bottom: 1px solid #9198a1; line-height: 18px; }

/* Page scrollbar */
.scrollbar { display: flex; flex-direction: column; align-items: center; width: 18px; background: #424242; }
.arrow { width: 0; height: 0; border: 5px solid transparent; }
.up { margin: 2px 0 9px; border-bottom: 6px solid #8f8f8f; }
.thumb { width: 100%; border-left: 2px solid #424242; background: #686868; flex: 485; }
.track { flex: 355; }
.down { border-top: 6px solid #fff; }
```
